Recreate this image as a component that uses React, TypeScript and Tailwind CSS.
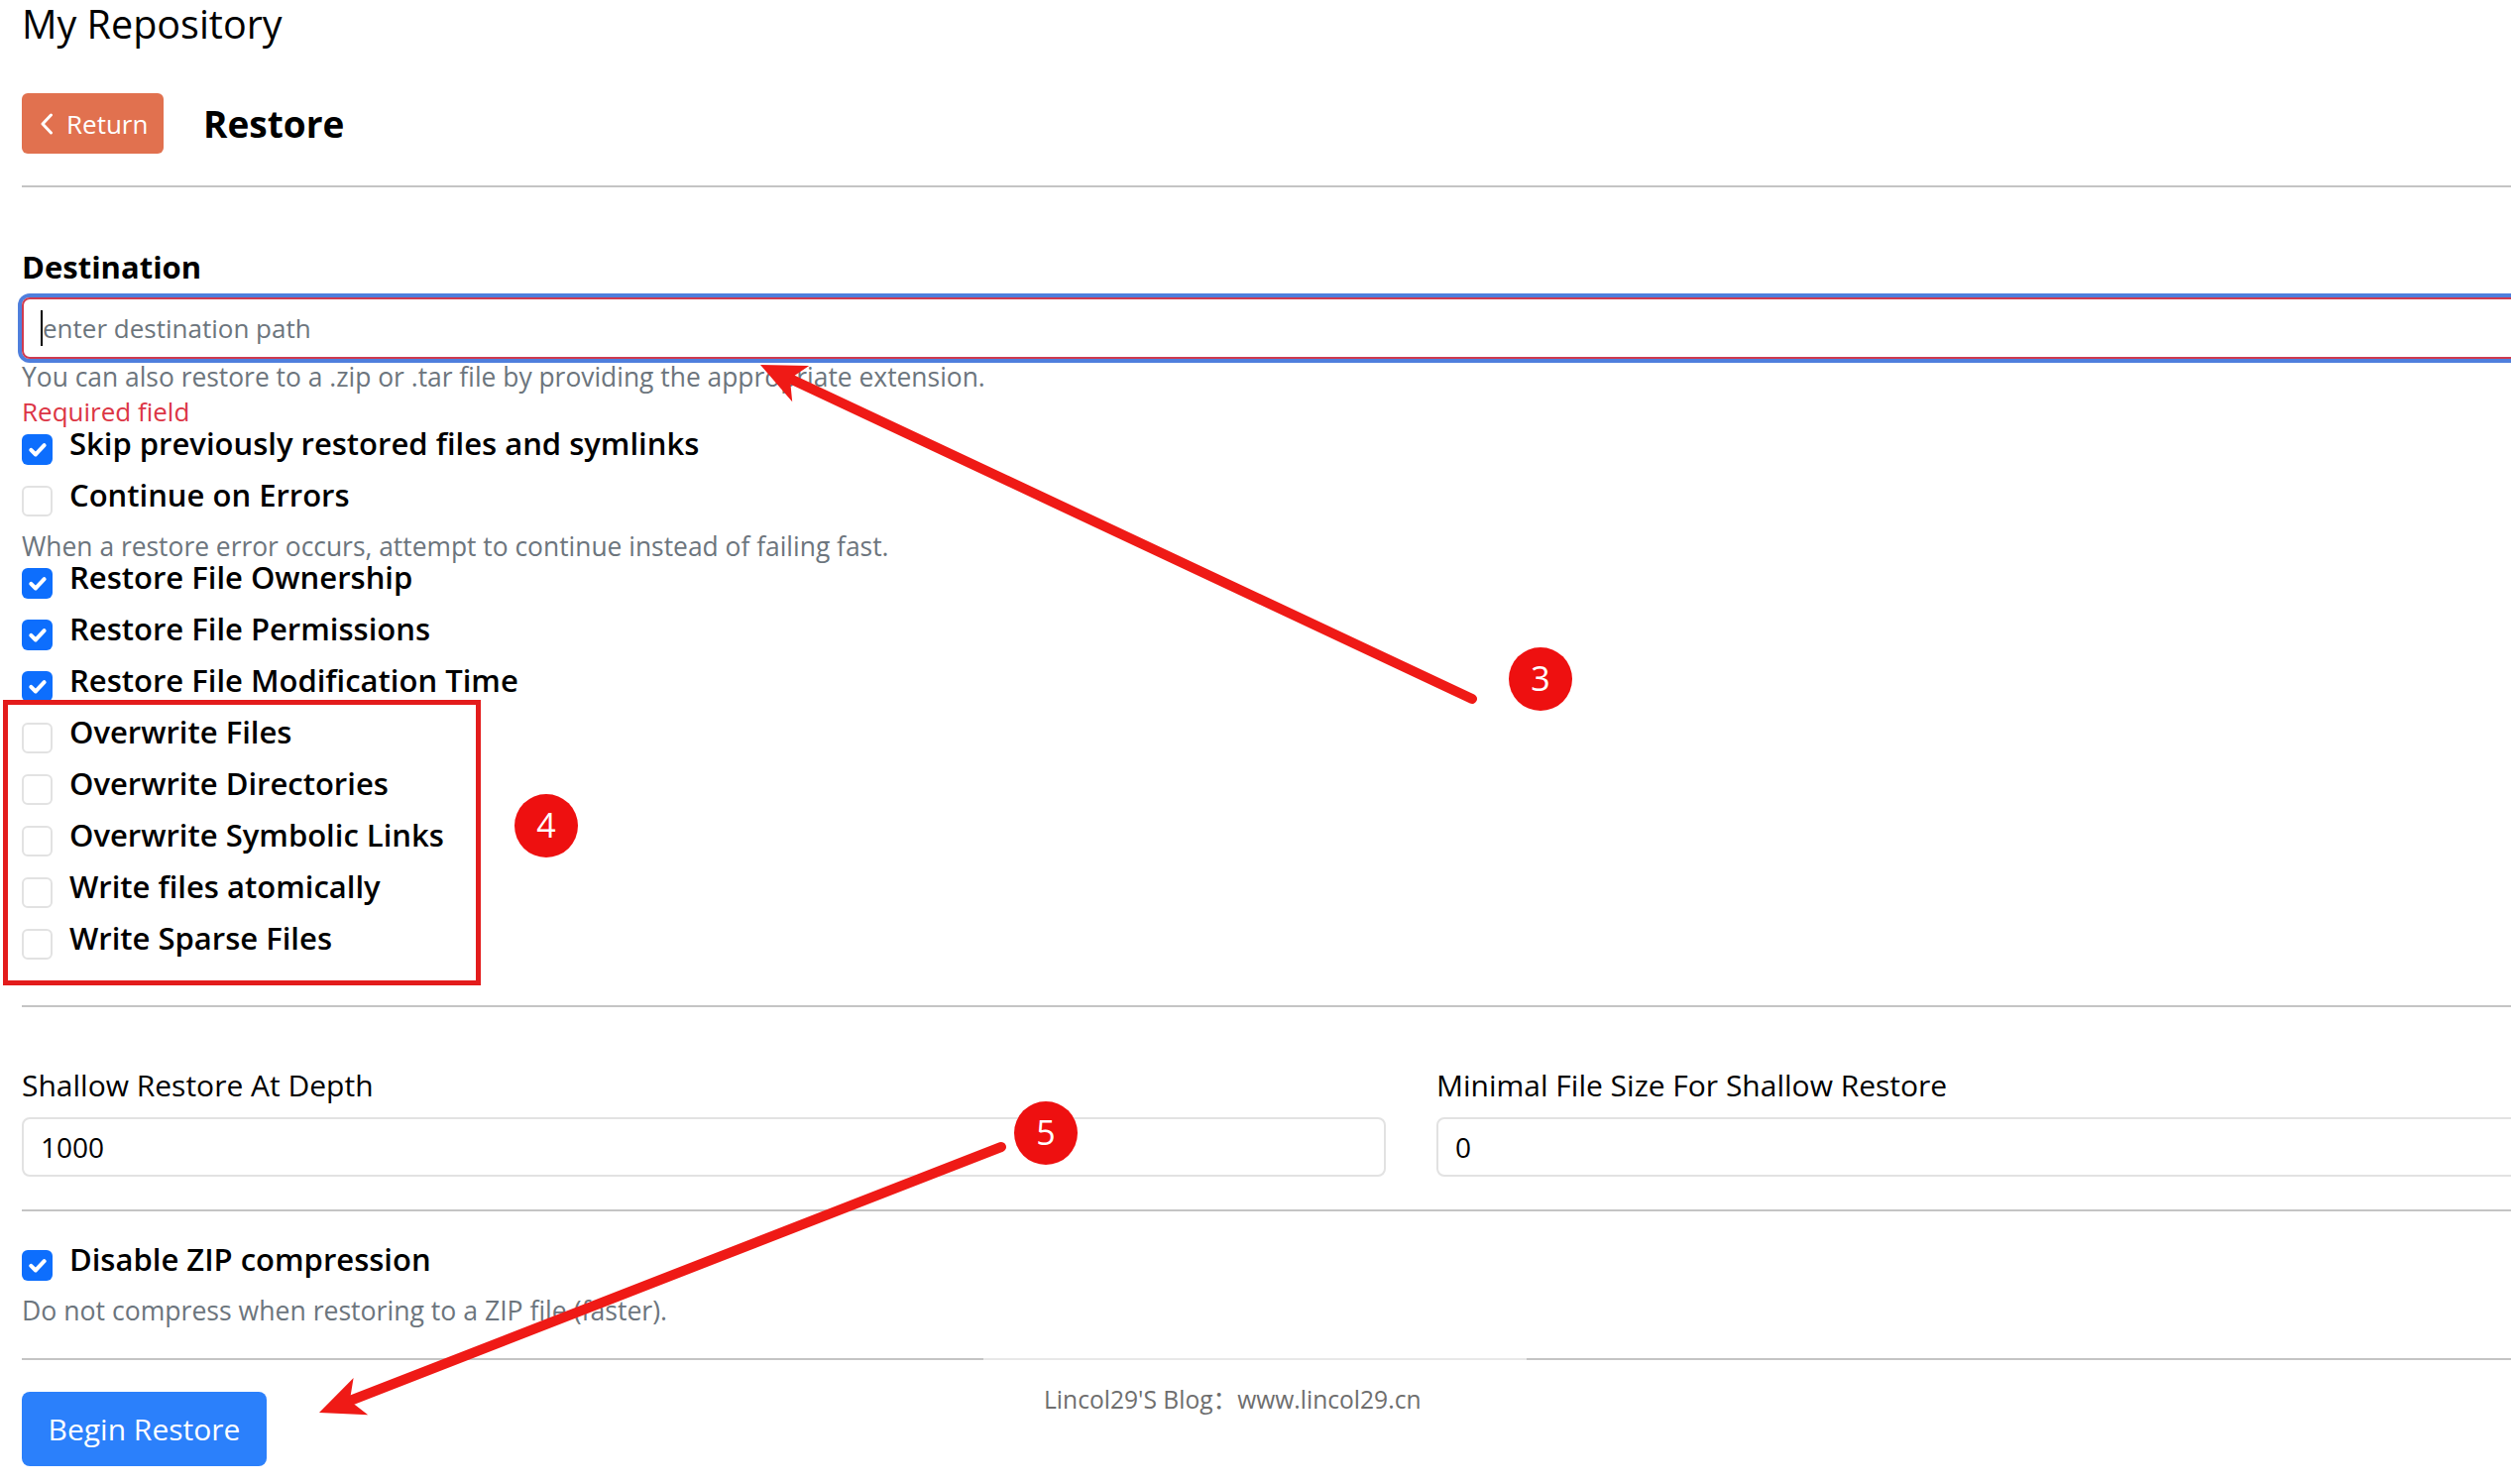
import React from "react";

const FONT = '"Open Sans", "Noto Sans", "Noto Sans CJK SC", sans-serif';

function Check({ checked }: { checked: boolean }) {
  return checked ? (
    <span className="mt-[6px] flex h-[31px] w-[31px] shrink-0 items-center justify-center rounded-[6px] bg-[#0d6efd]">
      <svg viewBox="0 0 20 20" width="31" height="31">
        <path d="M6 10.2l3 3l5.6-6" fill="none" stroke="#fff" strokeWidth="2.6" strokeLinecap="round" strokeLinejoin="round" />
      </svg>
    </span>
  ) : (
    <span className="mt-[6px] h-[31px] w-[31px] shrink-0 rounded-[6px] border-2 border-[#e2e2e2] bg-white" />
  );
}

function CheckRow({ label, checked }: { label: string; checked: boolean }) {
  return (
    <div className="flex h-[52px] items-start">
      <Check checked={checked} />
      <span className="ml-[17px] whitespace-nowrap text-[31px] font-semibold leading-[30px] text-black">{label}</span>
    </div>
  );
}

function Annotations() {
  return (
    <svg className="pointer-events-none absolute left-0 top-0" width="2533" height="1497" viewBox="0 0 2533 1497">
      <rect x="5.5" y="708.5" width="477" height="283" fill="none" stroke="#e31c1c" strokeWidth="5" />
      <line x1="1485" y1="705" x2="797" y2="382" stroke="#ef1a16" strokeWidth="10" strokeLinecap="round" />
      <polygon points="767,368 816.2,369 796.9,382 799.2,405.2" fill="#ef1a16" />
      <line x1="1010" y1="1157" x2="353" y2="1413" stroke="#ef1a16" strokeWidth="10" strokeLinecap="round" />
      <polygon points="322,1425 356.6,1390.1 352.8,1413 371.2,1427.3" fill="#ef1a16" />
      {[
        { cx: 1554, cy: 685, n: "3" },
        { cx: 551, cy: 833, n: "4" },
        { cx: 1055, cy: 1143, n: "5" },
      ].map((b) => (
        <g key={b.n}>
          <circle cx={b.cx} cy={b.cy} r="32" fill="#ee1010" />
          <text
            x={b.cx}
            y={b.cy + 12}
            textAnchor="middle"
            fill="#fff"
            fontSize="34"
            style={{ fontFamily: '"Open Sans", sans-serif' }}
          >
            {b.n}
          </text>
        </g>
      ))}
    </svg>
  );
}

export default function App() {
  return (
    <div className="relative min-h-screen w-full overflow-hidden bg-white text-black" style={{ fontFamily: FONT }}>
      <div className="w-[2900px] pl-[22px]">
        <h1 className="pt-[2px] text-[39.5px] font-medium leading-[44px] text-black">My Repository</h1>

        <div className="mt-[48px] flex h-[61px] items-center gap-[40px]">
          <button className="flex h-[61px] w-[143px] items-center rounded-[6px] bg-[#e1714f] pl-[18px] text-[26px] leading-none text-white">
            <svg width="14" height="22" viewBox="0 0 14 22">
              <path d="M11.5 2 L3 11 L11.5 20" fill="none" stroke="#fff" strokeWidth="3" strokeLinecap="round" strokeLinejoin="round" />
            </svg>
            <span className="ml-[13px]">Return</span>
          </button>
          <h2 className="text-[37px] font-bold leading-[61px]">Restore</h2>
        </div>

        <div className="mt-[32px] h-[2px] bg-[#c4c4c4]" />

        <div className="mt-[60px] text-[31px] font-bold leading-[40px]">Destination</div>
        <div className="mt-[11px] flex h-[62px] w-full items-center rounded-[8px] border-2 border-[#cf3b50] pl-[17px] shadow-[0_0_0_4px_#4f7fdd]">
          <span className="h-[36px] w-[2px] bg-black" />
          <span className="text-[26px] text-[#6c757d]">enter destination path</span>
        </div>
        <div className="text-[26.4px] leading-[36px] text-[#6c757d]">
          You can also restore to a .zip or .tar file by providing the appropriate extension.
        </div>
        <div className="text-[26px] leading-[34px] text-[#dc3545]">Required field</div>

        <CheckRow label="Skip previously restored files and symlinks" checked />
        <CheckRow label="Continue on Errors" checked={false} />
        <div className="text-[26.4px] leading-[31px] text-[#6c757d]">
          When a restore error occurs, attempt to continue instead of failing fast.
        </div>
        <CheckRow label="Restore File Ownership" checked />
        <CheckRow label="Restore File Permissions" checked />
        <CheckRow label="Restore File Modification Time" checked />
        <CheckRow label="Overwrite Files" checked={false} />
        <CheckRow label="Overwrite Directories" checked={false} />
        <CheckRow label="Overwrite Symbolic Links" checked={false} />
        <CheckRow label="Write files atomically" checked={false} />
        <CheckRow label="Write Sparse Files" checked={false} />

        <div className="mt-[31px] h-[2px] bg-[#c4c4c4]" />

        <div className="grid grid-cols-[1376px_1376px] gap-x-[51px]">
          <div>
            <div className="mt-[59px] text-[30px] leading-[40px]">Shallow Restore At Depth</div>
            <div className="mt-[12px] flex h-[60px] items-center rounded-[8px] border-2 border-[#e2e2e2] px-[17px] text-[28px]">1000</div>
          </div>
          <div>
            <div className="mt-[59px] text-[30px] leading-[40px]">Minimal File Size For Shallow Restore</div>
            <div className="mt-[12px] flex h-[60px] items-center rounded-[8px] border-2 border-[#e2e2e2] px-[17px] text-[28px]">0</div>
          </div>
        </div>

        <div className="mt-[33px] h-[2px] bg-[#c4c4c4]" />

        <div className="mt-[33px]">
          <CheckRow label="Disable ZIP compression" checked />
        </div>
        <div className="text-[26.6px] leading-[31px] text-[#6c757d]">
          Do not compress when restoring to a ZIP file (faster).
        </div>

        <div className="mt-[32px] h-[2px] bg-[#c4c4c4]" />

        <button className="mt-[32px] h-[75px] w-[247px] rounded-[8px] bg-[#2b80fb] text-[30px] text-white">Begin Restore</button>
      </div>

      <div className="absolute left-[992px] top-[1370px] w-[548px] border-t-2 border-[#e8e8e8] bg-white pl-[61px] pt-[22px] text-[24.6px] leading-[36px] text-[#6e6e6e]">
        Lincol29'S Blog：www.lincol29.cn
      </div>

      <Annotations />
    </div>
  );
}
